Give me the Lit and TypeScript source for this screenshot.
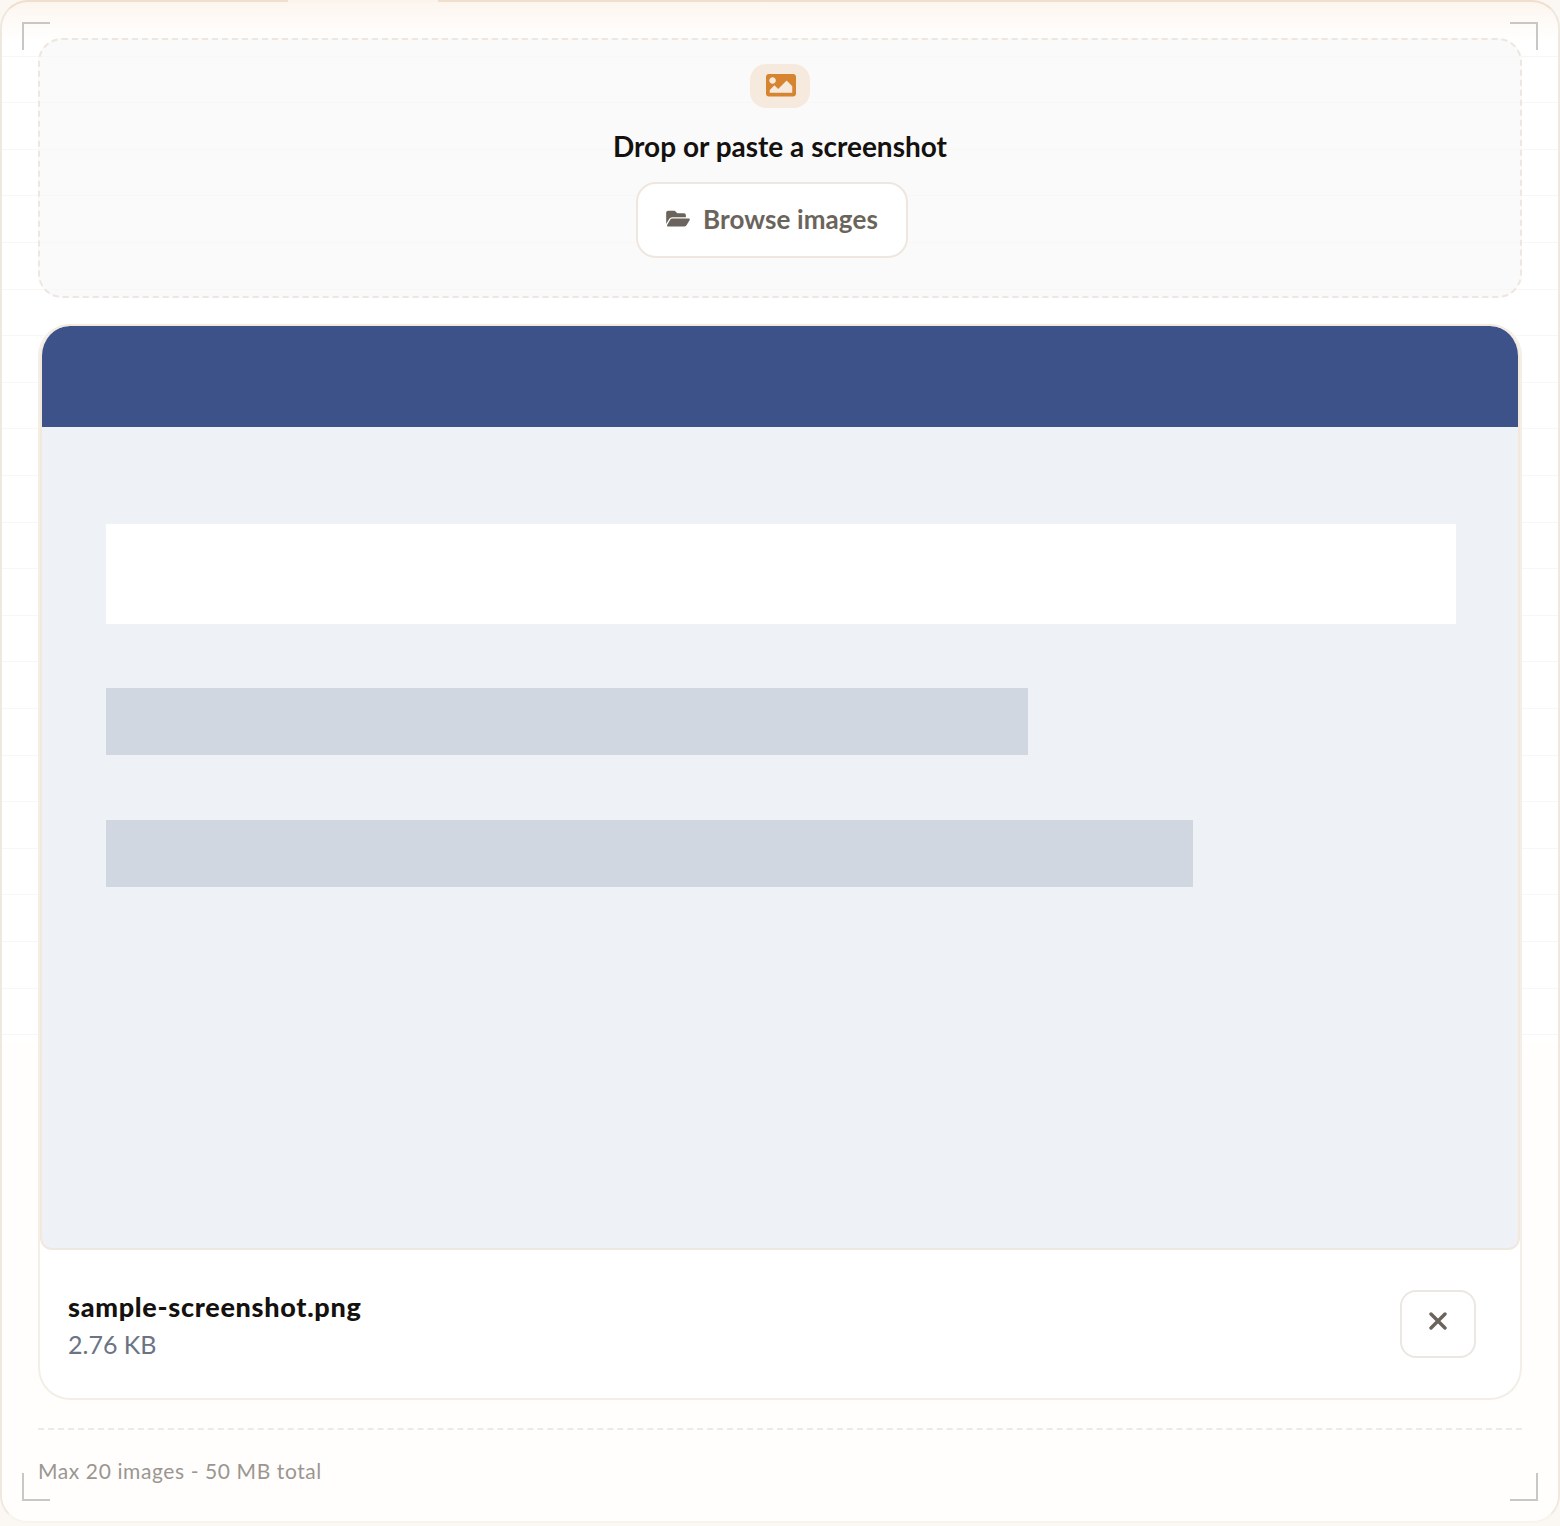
import { LitElement, html, css } from "lit";
import { customElement } from "lit/decorators.js";

@customElement("app-root")
export class AppRoot extends LitElement {
  static styles = css`
    :host { display: block; background: #fbf7f2; font-family: "Lato", "Noto Sans", sans-serif; height: 1526px; }
    * { box-sizing: border-box; }
    .shell {
      position: relative; height: 1523px; padding: 36px; display: flex; flex-direction: column;
      border: 2px solid #efe8df; border-top-color: #f0dfcf; border-bottom-color: #f8f3ec; border-radius: 28px;
      background:
        linear-gradient(180deg, #fdf6ef 0, rgba(255,255,255,0) 40px),
        repeating-linear-gradient(180deg, transparent 0, transparent 45.6px, #f8f7f5 45.6px, #f8f7f5 46.6px),
        #fff;
      background-position: 0 0, 0 8px, 0 0;
    }
    .shell::after {
      content: ""; position: absolute; left: 0; right: 0; top: 1040px; bottom: 0; background: #fffefd;
      border-radius: 0 0 26px 26px;
    }
    .shell > * { position: relative; z-index: 1; }
    .shell > .topgap { position: absolute; left: 286px; top: -2px; width: 150px; height: 2px; background: #fcf4ec; }
    .shell > .br { position: absolute; }
    .br { width: 28px; height: 28px; border: 0 solid #c9c7c5; z-index: 2; }
    .tl { left: 20px; top: 20px; border-width: 2px 0 0 2px; }
    .tr { right: 20px; top: 20px; border-width: 2px 2px 0 0; }
    .bl { left: 20px; bottom: 20px; border-width: 0 0 2px 2px; }
    .brr { right: 20px; bottom: 20px; border-width: 0 2px 2px 0; }
    .drop {
      height: 260px; flex: none; padding-top: 24px; display: flex; flex-direction: column; align-items: center;
      border: 2px dashed #eee6df; border-radius: 24px; background: rgba(247,247,247,.6);
    }
    .chip { width: 60px; height: 44px; border-radius: 16px; background: #f6eadf; display: flex; align-items: center; justify-content: center; }
    .chip svg { width: 30px; height: 22.5px; fill: #d6842f; display: block; margin: -1px 0 0 2px; }
    h2 { margin: 21px 0 0; font-size: 28px; line-height: 34px; font-weight: 700; color: #14110f; }
    .row { display: flex; margin-top: 19px; gap: 0; }
    .spacer { width: 16px; }
    .browse {
      width: 272px; height: 76px; display: flex; align-items: center; gap: 13px; padding-left: 28px;
      background: #fff; border: 2px solid #efe7df; border-radius: 20px;
      font-size: 26px; font-weight: 700; color: #6b645c; letter-spacing: .1px;
    }
    .browse svg { width: 24px; height: 21px; fill: #6b645c; margin-top: -4px; }
    .browse span { margin-top: -2px; }
    .card {
      flex: none; margin-top: 26px; height: 1076px; border: 2px solid #f3eee6; border-top-color: #f5e9dc; border-radius: 32px; background: #fff;
      display: flex; flex-direction: column; overflow: hidden;
    }
    .frame {
      height: 924px; flex: none; border: 2px solid #f3e8dc; border-top-width: 0; border-bottom-color: #eee8e0; border-radius: 30px 30px 12px 12px;
      background: #eef1f6; overflow: hidden; padding-top: 0;
    }
    .hdr { height: 101px; background: #3d5289; }
    .bars { padding: 97px 62px 0 64px; display: flex; flex-direction: column; }
    .white { height: 100px; background: #fff; }
    .g { height: 67px; background: #d1d7e0; }
    .g1 { width: 922px; margin-top: 64px; }
    .g2 { width: 1087px; margin-top: 65px; }
    .meta { flex: 1; display: flex; justify-content: space-between; padding: 40px 44px 0 28px; }
    .name { font-size: 27px; line-height: 34px; font-weight: 900; color: #14110f; letter-spacing: .7px; }
    .size { font-size: 25px; line-height: 36px; margin-top: 2px; color: #6b7485; }
    .x { width: 76px; height: 68px; border: 2px solid #ebe7e2; border-radius: 16px; background: #fff; display: flex; align-items: center; justify-content: center; margin-top: 0; }
    .x svg { width: 18px; height: 18px; stroke: #6b645c; stroke-width: 3.4; stroke-linecap: round; fill: none; margin-top: -6px; }
    .foot { flex: none; margin-top: 28px; border-top: 2px dashed #eee9e3; padding-top: 26px; font-size: 21px; line-height: 30px; color: #9b9691; letter-spacing: .6px; }
  `;

  render() {
    return html`
      <div class="shell">
        <div class="topgap"></div>
        <i class="br tl"></i><i class="br tr"></i><i class="br bl"></i><i class="br brr"></i>
        <div class="drop">
          <div class="chip">
            <svg viewBox="0 64 512 384"><path d="M464 448H48c-26.51 0-48-21.49-48-48V112c0-26.51 21.49-48 48-48h416c26.51 0 48 21.49 48 48v288c0 26.51-21.49 48-48 48zM112 120c-30.928 0-56 25.072-56 56s25.072 56 56 56 56-25.072 56-56-25.072-56-56-56zM64 384h384V272l-87.515-87.515c-4.686-4.686-12.284-4.686-16.971 0L208 320l-55.515-55.515c-4.686-4.686-12.284-4.686-16.971 0L64 336v48z"/></svg>
          </div>
          <h2>Drop or paste a screenshot</h2>
          <div class="row">
            <div class="browse">
              <svg viewBox="0 0 576 512"><path d="M572.694 292.093L500.27 416.248A63.997 63.997 0 0 1 444.989 448H45.025c-18.523 0-30.064-20.093-20.731-36.093l72.424-124.155A64 64 0 0 1 152 256h399.964c18.523 0 30.064 20.093 20.73 36.093zM152 224h328v-48c0-26.51-21.49-48-48-48H272l-64-64H48C21.49 64 0 85.49 0 112v278.046l69.077-118.418C86.214 242.25 117.989 224 152 224z"/></svg>
              <span>Browse images</span>
            </div>
            <div class="spacer"></div>
          </div>
        </div>
        <div class="card">
          <div class="frame">
            <div class="hdr"></div>
            <div class="bars">
              <div class="white"></div>
              <div class="g g1"></div>
              <div class="g g2"></div>
            </div>
          </div>
          <div class="meta">
            <div>
              <div class="name">sample-screenshot.png</div>
              <div class="size">2.76 KB</div>
            </div>
            <div class="x"><svg viewBox="0 0 18 18"><path d="M2 2l14 14M16 2L2 16"/></svg></div>
          </div>
        </div>
        <div class="foot">Max 20 images - 50 MB total</div>
      </div>
    `;
  }
}
